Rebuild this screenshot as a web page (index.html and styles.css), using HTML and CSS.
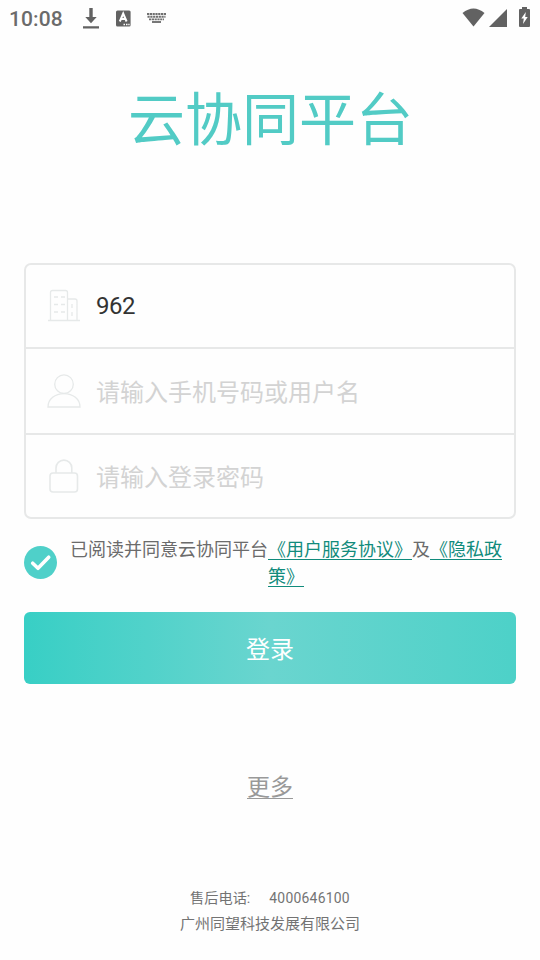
FILE: index.html
```html
<!DOCTYPE html>
<html lang="zh-CN">
<head>
<meta charset="utf-8">
<title>云协同平台</title>
<link rel="stylesheet" href="styles.css">
</head>
<body>
<header class="status">
  <span class="clock">10:08</span>
  <svg class="download" width="16" height="22" viewBox="0 0 16 22"><path d="M6.3 0h3.400v9h4L8 15.300 2.300 9h4zM0 18.200h16v2.300H0z"/></svg>
  <svg class="lang" width="15" height="17" viewBox="0 0 15 17"><rect y=".5" width="14.600" height="16" rx="1.500"/><path class="cut" d="M3.800 11.500 7.200 3.500 10.600 11.500M5 9h4.400"/><path class="dots" d="M7.500 14.500h1.500M10 14.500h1.500M12.300 14.500h1.300"/></svg>
  <svg class="keys" width="20" height="12" viewBox="0 0 20 12"><path d="M0 2h19M.5 4.700h18M2 7.400h15" stroke-dasharray="2.200 .6"/><path d="M5 10h9"/></svg>
  <span class="space"></span>
  <svg class="wifi" width="24" height="20" viewBox="0 0 24 20"><path d="M.5 5Q11.500-4 22.500 5L11.500 18.500z"/></svg>
  <svg class="signal" width="18" height="18" viewBox="0 0 18 18"><path d="M18 0v18H0z"/></svg>
  <svg class="battery" width="11" height="20" viewBox="0 0 11 20"><path d="M3 0h5v2h2q1 0 1 1v16q0 1-1 1H1q-1 0-1-1V3q0-1 1-1h2z"/><path class="bolt" d="M6.800 5 2.300 11.500h2.500L4 17l4.700-7H6.200z"/></svg>
</header>
<main>
  <h1>云协同平台</h1>
  <form class="fields">
    <label class="field">
      <svg width="34" height="34" viewBox="0 0 34 34"><path d="M1 31.500h32M3.500 31.500v-28q0-2 2-2h13q2 0 2 2v28M20.500 10h7.500q2 0 2 2v19.500M7 8h4m3 0h4M7 15.500h4m3 0h4M7 23h4m3 0h4M25 15v4M25 23v4"/></svg>
      <input class="number" type="text" value="962">
    </label>
    <label class="field">
      <svg width="34" height="34" viewBox="0 0 34 34"><circle cx="17" cy="10.200" r="9.300"/><path d="M1 33c0-8 7-13.300 16-13.300S33 25 33 33z"/></svg>
      <input type="text" placeholder="请输入手机号码或用户名">
    </label>
    <label class="field">
      <svg class="lock" width="34" height="34" viewBox="0 0 34 34"><rect x="3" y="14" width="27.500" height="19" rx="3"/><path d="M9 14V9a7.900 7.900 0 0 1 15.800 0v5"/></svg>
      <input type="password" placeholder="请输入登录密码">
    </label>
  </form>
  <div class="agree">
    <svg width="33" height="33" viewBox="0 0 33 33"><circle cx="16.500" cy="16.500" r="16.500"/><path d="m8.700 17.200 5.300 5.100L24.700 11.200"/></svg>
    <p>已阅读并同意云协同平台<a>《用户服务协议》</a>及<a>《隐私政策》</a></p>
  </div>
  <button type="button">登录</button>
  <a class="more">更多</a>
</main>
<footer>
  <div class="phone"><span>售后电话:</span><span class="digits">4000646100</span></div>
  <div class="company">广州同望科技发展有限公司</div>
</footer>
</body>
</html>
```
FILE: styles.css
```css
* { box-sizing: border-box; }
body {
  margin: 0;
  height: 960px;
  display: flex;
  flex-direction: column;
  background: #fefefe;
  color: #6b6b6b;
  font-family: Roboto, "Noto Sans CJK SC", sans-serif;
  overflow: hidden;
}
svg { display: block; flex: none; }
.status {
  height: 38px;
  padding: 0 10px 0 9px;
  display: flex;
  align-items: center;
  fill: #626262;
}
.clock { width: 74px; font-size: 21px; font-weight: 500; letter-spacing: .1px; line-height: 38px; }
.download { margin-bottom: 1px; }
.lang { margin: 0 0 2px 17px; }
.cut { fill: none; stroke: #fff; stroke-width: 2; }
.dots { stroke: #fff; stroke-width: 1.5; }
.keys { margin: 0 0 2px 16px; fill: none; stroke: #707070; stroke-width: 1.9; }
.space { flex: 1; }
.wifi { margin: 0 3px 3px 0; }
.signal { margin: 0 12px 2px 0; }
.battery { margin-bottom: 4px; }
.bolt { fill: #fff; }
main { padding: 0 24px; display: flex; flex-direction: column; }
h1 {
  margin: 41px 0 0;
  height: 84px;
  line-height: 84px;
  padding-left: 1px;
  text-align: center;
  font-size: 57px;
  font-weight: 400;
  color: #52cbc5;
}
.fields {
  margin-top: 100px;
  height: 256px;
  border: 2px solid #e7e8e8;
  border-radius: 7px;
  display: grid;
  grid-template-rows: 82px 86px 84px;
}
.field { display: flex; align-items: center; padding-left: 21px; }
.field + .field { border-top: 2px solid #e7e8e8; }
.field svg { fill: none; stroke: #e6e9e9; stroke-width: 1.3; margin-bottom: 1px; }
.field .lock { stroke-width: 1.6; margin-bottom: 0; }
input {
  flex: 1;
  min-width: 0;
  height: 40px;
  margin-left: 15px;
  padding: 3px 0 0;
  border: 0;
  outline: 0;
  background: none;
  font: 24px Roboto, "Noto Sans CJK SC", sans-serif;
  color: #333;
}
.number { padding-top: 0; letter-spacing: -.5px; }
input::placeholder { color: #d3d3d3; }
.agree { margin-top: 17px; display: flex; align-items: center; height: 54px; }
.agree svg { fill: #4fd0c9; margin-top: -1px; }
.agree path { fill: none; stroke: #fff; stroke-width: 3.6; stroke-linecap: round; stroke-linejoin: round; }
.agree p {
  width: 434px;
  margin: 0 0 0 12px;
  text-align: center;
  font-size: 18px;
  line-height: 27px;
  word-break: break-all;
  line-break: anywhere;
  text-spacing-trim: space-all;
}
.agree a {
  color: #118b7c;
  text-decoration: underline;
  text-decoration-thickness: 1px;
  text-underline-offset: 3px;
  text-decoration-skip-ink: none;
}
button {
  margin-top: 22px;
  height: 72px;
  padding: 0 0 2px;
  border: 0;
  border-radius: 6px;
  background: linear-gradient(90deg, #38cfc5, #6ad5cf 50%, #4dd1c8);
  color: #fff;
  font: 24px Roboto, "Noto Sans CJK SC", sans-serif;
}
.more {
  align-self: center;
  margin-top: 86px;
  font-size: 23px;
  line-height: 36px;
  color: #999;
  text-decoration: underline;
  text-decoration-thickness: 1px;
  text-underline-offset: 3px;
}
footer { margin-top: 79px; text-align: center; color: #737373; }
.phone { display: flex; justify-content: center; gap: 19px; font-size: 14.2px; line-height: 26px; }
.digits { font-size: 13.9px; letter-spacing: .25px; }
.company { font-size: 15px; line-height: 26px; }
```
